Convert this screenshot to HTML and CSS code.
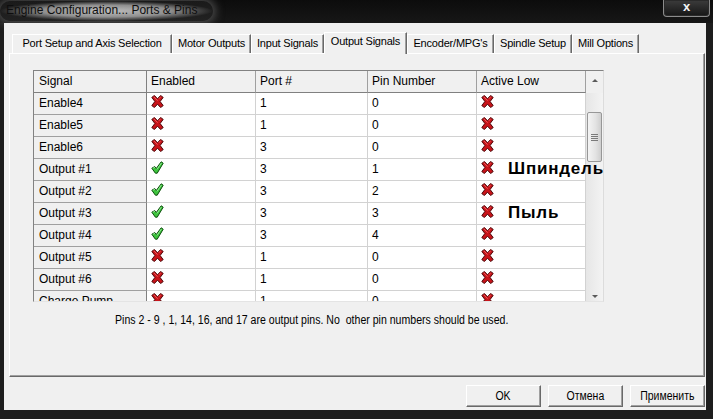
FILE: index.html
```html
<!DOCTYPE html>
<html lang="en">
<head>
    <meta charset="UTF-8">
    <title>Engine Configuration... Ports &amp; Pins</title>
    <link rel="stylesheet" href="styles.css">
</head>
<body>
    <svg class="defs" xmlns="http://www.w3.org/2000/svg">
        <symbol id="no" viewBox="0 0 13 13">
            <path d="M0.8 2.4 L3.4 0.5 L6.5 3.8 L9.6 0.5 L12.2 2.4 L9.1 6.5 L12.2 10.6 L9.6 12.5 L6.5 9.2 L3.4 12.5 L0.8 10.6 L3.9 6.5 Z" fill="#c8141a" stroke="#4b0608" stroke-width="1" stroke-linejoin="round"/>
            <path d="M3.1 2 L6.3 5.4 M9.5 2 L8.1 3.6" stroke="#ee5a5a" stroke-width="1" stroke-linecap="round"/>
        </symbol>
        <symbol id="yes" viewBox="0 0 13 13">
            <path d="M0.8 7.2 L3.8 5.6 L5.3 7.4 L10.2 0.8 L12.2 2.2 L6.2 12.2 L4.4 12.2 Z" fill="#3cc43c" stroke="#0d4d0d" stroke-width="1" stroke-linejoin="round"/>
            <path d="M2.2 7.1 L3.7 6.4 M6.3 8 L10.2 2.3" stroke="#9ef09e" stroke-width="0.9" stroke-linecap="round"/>
        </symbol>
    </svg>

    <div class="window">
        <div class="titlebar">
            <div class="title">Engine Configuration... Ports &amp; Pins</div>
            <div class="close">x</div>
        </div>
        <div class="frame">
            <div class="client">
                <div class="tabs">
                    <div class="tab">Port Setup and Axis Selection</div>
                    <div class="tab">Motor Outputs</div>
                    <div class="tab">Input Signals</div>
                    <div class="tab active">Output Signals</div>
                    <div class="tab">Encoder/MPG's</div>
                    <div class="tab">Spindle Setup</div>
                    <div class="tab">Mill Options</div>
                </div>

                <div class="panel">
                    <div class="grid-wrap">
                        <div class="grid">
                            <div class="rows">
                                <div class="row head">
                                    <div class="cell side">Signal</div>
                                    <div class="cell">Enabled</div>
                                    <div class="cell">Port #</div>
                                    <div class="cell">Pin Number</div>
                                    <div class="cell">Active Low</div>
                                </div>
                                <div class="row">
                                    <div class="cell side">Enable4</div>
                                    <div class="cell"><svg class="icon"><use href="#no"/></svg></div>
                                    <div class="cell">1</div>
                                    <div class="cell">0</div>
                                    <div class="cell"><svg class="icon"><use href="#no"/></svg></div>
                                </div>
                                <div class="row">
                                    <div class="cell side">Enable5</div>
                                    <div class="cell"><svg class="icon"><use href="#no"/></svg></div>
                                    <div class="cell">1</div>
                                    <div class="cell">0</div>
                                    <div class="cell"><svg class="icon"><use href="#no"/></svg></div>
                                </div>
                                <div class="row">
                                    <div class="cell side">Enable6</div>
                                    <div class="cell"><svg class="icon"><use href="#no"/></svg></div>
                                    <div class="cell">3</div>
                                    <div class="cell">0</div>
                                    <div class="cell"><svg class="icon"><use href="#no"/></svg></div>
                                </div>
                                <div class="row">
                                    <div class="cell side">Output #1</div>
                                    <div class="cell"><svg class="icon"><use href="#yes"/></svg></div>
                                    <div class="cell">3</div>
                                    <div class="cell">1</div>
                                    <div class="cell"><svg class="icon"><use href="#no"/></svg></div>
                                </div>
                                <div class="row">
                                    <div class="cell side">Output #2</div>
                                    <div class="cell"><svg class="icon"><use href="#yes"/></svg></div>
                                    <div class="cell">3</div>
                                    <div class="cell">2</div>
                                    <div class="cell"><svg class="icon"><use href="#no"/></svg></div>
                                </div>
                                <div class="row">
                                    <div class="cell side">Output #3</div>
                                    <div class="cell"><svg class="icon"><use href="#yes"/></svg></div>
                                    <div class="cell">3</div>
                                    <div class="cell">3</div>
                                    <div class="cell"><svg class="icon"><use href="#no"/></svg></div>
                                </div>
                                <div class="row">
                                    <div class="cell side">Output #4</div>
                                    <div class="cell"><svg class="icon"><use href="#yes"/></svg></div>
                                    <div class="cell">3</div>
                                    <div class="cell">4</div>
                                    <div class="cell"><svg class="icon"><use href="#no"/></svg></div>
                                </div>
                                <div class="row">
                                    <div class="cell side">Output #5</div>
                                    <div class="cell"><svg class="icon"><use href="#no"/></svg></div>
                                    <div class="cell">1</div>
                                    <div class="cell">0</div>
                                    <div class="cell"><svg class="icon"><use href="#no"/></svg></div>
                                </div>
                                <div class="row">
                                    <div class="cell side">Output #6</div>
                                    <div class="cell"><svg class="icon"><use href="#no"/></svg></div>
                                    <div class="cell">1</div>
                                    <div class="cell">0</div>
                                    <div class="cell"><svg class="icon"><use href="#no"/></svg></div>
                                </div>
                                <div class="row">
                                    <div class="cell side">Charge Pump</div>
                                    <div class="cell"><svg class="icon"><use href="#no"/></svg></div>
                                    <div class="cell">1</div>
                                    <div class="cell">0</div>
                                    <div class="cell"><svg class="icon"><use href="#no"/></svg></div>
                                </div>
                            </div>
                            <div class="scrollbar">
                                <div class="arrow up"></div>
                                <div class="track">
                                    <div class="thumb"><span class="grip"></span></div>
                                </div>
                                <div class="arrow down"></div>
                            </div>
                        </div>
                        <div class="note spindle">Шпиндель</div>
                        <div class="note dust">Пыль</div>
                    </div>
                    <p class="hint"><span class="narrow">Pins 2 - 9 , 1, 14, 16, and 17 are output pins. No &nbsp;other pin numbers should be used.</span></p>
                </div>

                <div class="buttons">
                    <button><span class="narrow">OK</span></button>
                    <button><span class="narrow">Отмена</span></button>
                    <button><span class="narrow">Применить</span></button>
                </div>
            </div>
        </div>
    </div>
</body>
</html>
```

FILE: styles.css
```css
body {
    margin: 0;
    background: #000;
    font-family: "Liberation Sans", Arial, sans-serif;
}
.defs {
    position: absolute;
    width: 0;
    height: 0;
}
.window {
    width: 713px;
    height: 419px;
    background: #1d1d1d;
    display: flex;
    flex-direction: column;
}
.titlebar {
    height: 23px;
    display: flex;
    justify-content: space-between;
    align-items: flex-start;
    background: linear-gradient(#0c0c0c, #171717);
}
.title {
    margin-top: 1px;
    padding: 2px 16px 4px 6px;
    border-radius: 10px;
    font-size: 12px;
    color: #0e0e0e;
    background: radial-gradient(farthest-side, rgba(200,200,200,0.95) 0%, rgba(165,165,165,0.85) 60%, rgba(80,80,80,0.2) 100%);
    box-shadow: 0 0 8px 3px rgba(110,110,110,0.6);
}
.close {
    width: 45px;
    height: 16px;
    margin-right: 3px;
    border: 1px solid #8c8c8c;
    border-top: none;
    border-radius: 0 0 4px 4px;
    background: linear-gradient(#3c3c3c, #161616);
    box-shadow: inset 0 0 0 1px #2a2a2a;
    color: #f4f4f4;
    font-size: 13px;
    font-weight: bold;
    line-height: 14px;
    text-align: center;
}
.frame {
    flex: 1;
    padding: 0 7px 9px 4px;
    display: flex;
}
.client {
    flex: 1;
    background: #f0f0f0;
    display: flex;
    flex-direction: column;
}
.tabs {
    height: 30px;
    padding-left: 8px;
    display: flex;
    align-items: flex-end;
}
.tab {
    box-sizing: border-box;
    height: 19px;
    border-top: 1px solid #fff;
    border-left: 1px solid #fff;
    border-right: 1px solid #696969;
    box-shadow: inset -1px 0 #a0a0a0;
    font-size: 11px;
    letter-spacing: -0.2px;
    line-height: 17px;
    text-align: center;
    color: #000;
    white-space: nowrap;
}
.tab:nth-child(1) { width: 160px; }
.tab:nth-child(2) { width: 79px; }
.tab:nth-child(3) { width: 73px; }
.tab:nth-child(4) { width: 83px; }
.tab:nth-child(5) { width: 87px; }
.tab:nth-child(6) { width: 78px; }
.tab:nth-child(7) { width: 67px; }
.tab.active {
    height: 22px;
    margin-bottom: -1px;
    position: relative;
    z-index: 1;
    background: #f0f0f0;
    line-height: 17px;
}
.panel {
    box-sizing: border-box;
    height: 324px;
    margin: 0 1px 0 5px;
    border-top: 1px solid #fff;
    border-left: 1px solid #fff;
    border-right: 1px solid #696969;
    border-bottom: 1px solid #696969;
    box-shadow: inset -1px -1px #a0a0a0;
    padding: 16px 0 0 23px;
}
.grid-wrap {
    position: relative;
    width: 571px;
}
.grid {
    box-sizing: border-box;
    height: 232px;
    border: 1px solid #828282;
    border-right-color: #dcdcdc;
    border-bottom-color: #e4e4e4;
    background: #fff;
    display: flex;
    overflow: hidden;
}
.rows {
    width: 552px;
}
.row {
    display: grid;
    grid-template-columns: 113px 109px 112px 109px 109px;
    height: 22px;
}
.cell {
    box-sizing: border-box;
    height: 22px;
    padding: 0 4px;
    border-right: 1px solid #d2d2d2;
    border-bottom: 1px solid #d2d2d2;
    font-size: 12px;
    line-height: 21px;
    color: #000;
    white-space: nowrap;
    overflow: hidden;
}
.cell.side {
    padding-left: 5px;
    background: #f0f0f0;
    border-right-color: #808080;
    border-bottom-color: #a0a0a0;
}
.head .cell {
    background: #f0f0f0;
    border-right-color: #a0a0a0;
    border-bottom-color: #808080;
}
.head .cell.side {
    border-right-color: #808080;
}
.icon {
    display: block;
    width: 13px;
    height: 13px;
    margin-top: 2px;
}
.scrollbar {
    width: 17px;
    display: flex;
    flex-direction: column;
    background: linear-gradient(to right, #e6e6e6, #f3f3f3);
}
.arrow {
    height: 18px;
    display: flex;
    align-items: center;
    justify-content: center;
}
.arrow.up {
    height: 22px;
    background: #f0f0f0;
}
.arrow.up::before {
    content: "";
    border-left: 3px solid transparent;
    border-right: 3px solid transparent;
    border-bottom: 3px solid #5a5a5a;
    margin-top: -4px;
}
.arrow.down::before {
    content: "";
    border-left: 3px solid transparent;
    border-right: 3px solid transparent;
    border-top: 3px solid #5a5a5a;
    margin-top: 8px;
}
.track {
    flex: 1;
    padding-top: 19px;
}
.thumb {
    box-sizing: border-box;
    height: 50px;
    margin: 0 1px;
    border: 1px solid #979797;
    border-radius: 2px;
    background: linear-gradient(to right, #f4f4f4, #e2e2e2 60%, #cfcfcf);
    display: flex;
    align-items: center;
    justify-content: center;
}
.grip {
    width: 7px;
    height: 7px;
    background: repeating-linear-gradient(#7a7a7a 0 1px, transparent 1px 2px);
}
.note {
    position: absolute;
    left: 475px;
    font-size: 17px;
    font-weight: bold;
    letter-spacing: 0.8px;
    line-height: 20px;
    color: #000;
}
.spindle {
    top: 89px;
}
.dust {
    top: 133px;
}
.narrow {
    display: inline-block;
    transform: scaleX(0.88);
    white-space: nowrap;
}
.hint {
    margin: 11px 0 0 82px;
    font-size: 12px;
    color: #000;
}
.hint .narrow {
    transform-origin: left center;
}
.buttons {
    display: flex;
    justify-content: flex-end;
    gap: 7px;
    padding: 8px 1px 0 0;
}
button {
    width: 75px;
    height: 22px;
    padding: 0;
    border: 1px solid;
    border-color: #fff #696969 #696969 #fff;
    box-shadow: inset -1px -1px #a0a0a0;
    background: #f0f0f0;
    font-family: "Liberation Sans", Arial, sans-serif;
    font-size: 12.5px;
    color: #000;
}
button .narrow {
    transform: scaleX(0.84);
}
```
